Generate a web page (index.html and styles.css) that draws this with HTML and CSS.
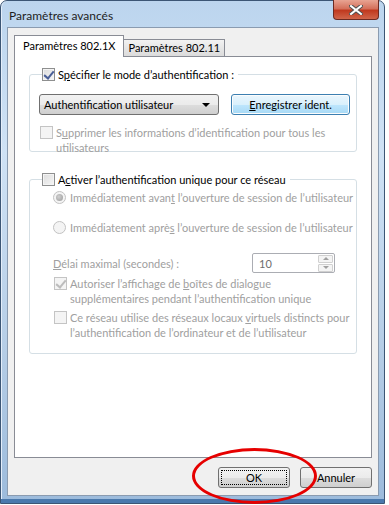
FILE: index.html
```html
<!DOCTYPE html>
<html lang="fr">
<head>
    <meta charset="UTF-8">
    <title>Paramètres avancés</title>
    <link rel="stylesheet" href="styles.css">
</head>
<body>
    <div class="window">
        <div class="titlebar">
            <span class="title">Paramètres avancés</span>
            <div class="close">
                <svg width="14" height="10" viewBox="0 0 14 10">
                    <path d="M2 1 L12 9 M12 1 L2 9" stroke="#505050" stroke-width="4" stroke-linecap="square"/>
                    <path d="M2 1 L12 9 M12 1 L2 9" stroke="#fff" stroke-width="2" stroke-linecap="square"/>
                </svg>
            </div>
        </div>
        <div class="client">
            <div class="tabs">
                <div class="tab active">Paramètres 802.1X</div>
                <div class="tab">Paramètres 802.11</div>
            </div>
            <div class="panel">
                <fieldset class="group group-auth">
                    <legend>
                        <label class="check">
                            <span class="box checked"></span>
                            <span>S<u>p</u>écifier le mode d’authentification :</span>
                        </label>
                    </legend>
                    <div class="row">
                        <div class="combo">
                            <span>Authentification utilisateur</span>
                            <span class="arrow"></span>
                        </div>
                        <div class="btn btn-hot"><u>E</u>nregistrer ident.</div>
                    </div>
                    <label class="check disabled multi">
                        <span class="box"></span>
                        <span>S<u>u</u>pprimer les informations d’identification pour tous les<br>utilisateurs</span>
                    </label>
                </fieldset>

                <fieldset class="group group-sso">
                    <legend>
                        <label class="check">
                            <span class="box"></span>
                            <span>A<u>c</u>tiver l’authentification unique pour ce réseau</span>
                        </label>
                    </legend>
                    <div class="indent">
                        <label class="radio disabled">
                            <span class="dot checked"></span>
                            <span>Immédiatement avan<u>t</u> l’ouverture de session de l’utilisateur</span>
                        </label>
                        <label class="radio disabled">
                            <span class="dot"></span>
                            <span>Immédiatement aprè<u>s</u> l’ouverture de session de l’utilisateur</span>
                        </label>
                        <div class="delay disabled">
                            <span><u>D</u>élai maximal (secondes) :</span>
                            <div class="spin">
                                <span class="spin-value">10</span>
                                <div class="spin-btns">
                                    <span class="spin-btn"><i class="up"></i></span>
                                    <span class="spin-btn"><i class="down"></i></span>
                                </div>
                            </div>
                        </div>
                        <label class="check disabled multi">
                            <span class="box checked"></span>
                            <span>Autoriser l’affichage de <u>b</u>oîtes de dialogue<br>supplémentaires pendant l’authentification unique</span>
                        </label>
                        <label class="check disabled multi">
                            <span class="box"></span>
                            <span>Ce réseau utilise des réseaux locaux <u>v</u>irtuels distincts pour<br>l’authentification de l’ordinateur et de l’utilisateur</span>
                        </label>
                    </div>
                </fieldset>
            </div>
            <div class="actions">
                <div class="btn btn-focus"><span>OK</span></div>
                <div class="btn">Annuler</div>
            </div>
        </div>
    </div>
    <div class="circle"></div>
</body>
</html>
```

FILE: styles.css
```css
* {
    box-sizing: border-box;
}

body {
    margin: 0;
    background: #fff;
    font-family: Lato, "Noto Sans", sans-serif;
    font-size: 11px;
    color: #000;
}

.window {
    width: 385px;
    height: 504px;
    border: 1px solid #3c5675;
    border-radius: 7px 7px 0 0;
    background: linear-gradient(180deg, #bcd5ee 0%, #cfe2f5 30%, #b5cde6 70%, #9cbbdc 100%);
    padding: 0 5px 7px 6px;
    display: flex;
    flex-direction: column;
    box-shadow: inset 0 -4px 0 #4a79ad, inset 1px 0 0 #e4eefa;
}

.titlebar {
    height: 28px;
    display: flex;
    align-items: flex-start;
}

.title {
    margin-top: 7px;
    padding-left: 2px;
    font-size: 12px;
    color: #1e1e1e;
}

.close {
    margin-left: auto;
    margin-top: -1px;
    width: 46px;
    height: 20px;
    border: 1px solid #6c2a22;
    border-top: none;
    border-radius: 0 0 4px 4px;
    background: linear-gradient(180deg, #e8a493 0%, #d4705b 45%, #c0391f 55%, #d0654a 100%);
    display: flex;
    align-items: center;
    justify-content: center;
}

.client {
    flex: 1;
    background: #f0f0f0;
    border: 1px solid #8a9bb0;
    padding: 7px 6px 7px 6px;
    display: flex;
    flex-direction: column;
}

.tabs {
    display: flex;
    align-items: flex-end;
    height: 21px;
    position: relative;
    z-index: 1;
}

.tab {
    height: 17px;
    padding: 0 4px;
    border: 1px solid #898c95;
    border-bottom: none;
    background: linear-gradient(180deg, #f2f2f2, #dbdbdb);
    line-height: 15px;
    margin-left: -1px;
}

.tab.active {
    height: 22px;
    margin-bottom: -1px;
    margin-left: 0;
    padding: 0 8px;
    background: #fff;
    line-height: 20px;
}

.panel {
    height: 402px;
    background: #fff;
    border: 1px solid #898c95;
    padding: 10px 14px 0 14px;
}

.group {
    border: 1px solid #d5dfe5;
    border-radius: 3px;
    margin: 0;
    padding: 0 6px 6px 9px;
    min-width: 0;
    white-space: nowrap;
}

.group legend {
    padding: 0 4px 0 0;
    margin-left: 3px;
}

.group-auth {
    height: 85px;
}

.group-sso {
    margin-top: 20px;
    height: 182px;
}

.check,
.radio {
    display: flex;
    align-items: flex-start;
    gap: 3px;
    line-height: 15px;
}

.box {
    flex: none;
    width: 13px;
    height: 13px;
    margin-top: 1px;
    border: 1px solid #8e8f8f;
    background: linear-gradient(135deg, #dcdcdc, #f6f6f6);
    box-shadow: inset 0 0 0 1px #f4f4f4;
    position: relative;
}

.box.checked::after {
    content: "";
    position: absolute;
    left: 3px;
    top: 0;
    width: 4px;
    height: 8px;
    border-right: 2px solid #4a5f97;
    border-bottom: 2px solid #4a5f97;
    transform: rotate(40deg);
}

.disabled {
    color: #a0a0a0;
}

.disabled .box {
    border-color: #c4c4c4;
    background: #f4f4f4;
    box-shadow: none;
}

.disabled .box.checked::after {
    border-color: #bcbcbc;
}

.row {
    display: flex;
    justify-content: space-between;
    align-items: center;
    margin: 12px 0 10px 0;
}

.combo {
    width: 180px;
    height: 21px;
    border: 1px solid #707070;
    border-radius: 3px;
    background: linear-gradient(180deg, #f2f2f2 0%, #ebebeb 50%, #dddddd 51%, #cfcfcf 100%);
    display: flex;
    align-items: center;
    justify-content: space-between;
    padding: 0 8px 0 4px;
}

.arrow {
    width: 0;
    height: 0;
    border-left: 4px solid transparent;
    border-right: 4px solid transparent;
    border-top: 4px solid #000;
}

.btn {
    height: 21px;
    border: 1px solid #707070;
    border-radius: 3px;
    background: linear-gradient(180deg, #f2f2f2 0%, #ebebeb 50%, #dddddd 51%, #cfcfcf 100%);
    display: flex;
    align-items: center;
    justify-content: center;
    text-align: center;
}

.btn-hot {
    width: 119px;
    border-color: #3c7fb1;
    background: linear-gradient(180deg, #eaf6fd 0%, #d9f0fc 50%, #bee6fd 51%, #a7d9f5 100%);
    box-shadow: inset 0 0 0 1px #fcfcfc;
}

.multi {
    padding-left: 1px;
}

.indent {
    padding-left: 14px;
    display: flex;
    flex-direction: column;
}

.radio {
    margin-top: 3px;
    margin-bottom: 7px;
}

.dot {
    flex: none;
    width: 13px;
    height: 13px;
    margin-top: 1px;
    border-radius: 50%;
    border: 1px solid #c2c2c2;
    background: #f4f4f4;
    position: relative;
}

.dot.checked::after {
    content: "";
    position: absolute;
    left: 2px;
    top: 2px;
    width: 7px;
    height: 7px;
    border-radius: 50%;
    background: radial-gradient(circle at 40% 40%, #d0d0d0, #9a9a9a);
}

.radio + .radio {
    margin-top: 8px;
}

.radio span:last-child {
    margin-left: 1px;
}

.delay {
    display: flex;
    justify-content: space-between;
    align-items: center;
    margin-top: 11px;
    padding-right: 15px;
}

.spin {
    width: 83px;
    height: 20px;
    border: 1px solid #abadb3;
    border-radius: 2px;
    display: flex;
    align-items: center;
    justify-content: space-between;
    padding: 0 1px 0 6px;
    color: #6d6d6d;
}

.spin-btns {
    display: flex;
    flex-direction: column;
    gap: 1px;
}

.spin-btn {
    width: 15px;
    height: 8px;
    border: 1px solid #d0d0d0;
    border-radius: 1px;
    background: #f4f4f4;
    display: flex;
    align-items: center;
    justify-content: center;
}

.spin-btn i {
    width: 0;
    height: 0;
    border-left: 3px solid transparent;
    border-right: 3px solid transparent;
}

.spin-btn .up {
    border-bottom: 3px solid #a0a0a0;
}

.spin-btn .down {
    border-top: 3px solid #a0a0a0;
}

.delay + .check {
    margin-top: 3px;
}

.check + .check {
    margin-top: 4px;
}

.actions {
    display: flex;
    justify-content: flex-end;
    gap: 10px;
    margin-top: 9px;
}

.actions .btn {
    width: 72px;
}

.btn-focus span {
    display: block;
    width: 66px;
    height: 15px;
    line-height: 13px;
    border: 1px dotted #000;
}

.circle {
    position: absolute;
    left: 192px;
    top: 448px;
    width: 125px;
    height: 56px;
    border: 3px solid #e60000;
    border-radius: 50%;
}
```
